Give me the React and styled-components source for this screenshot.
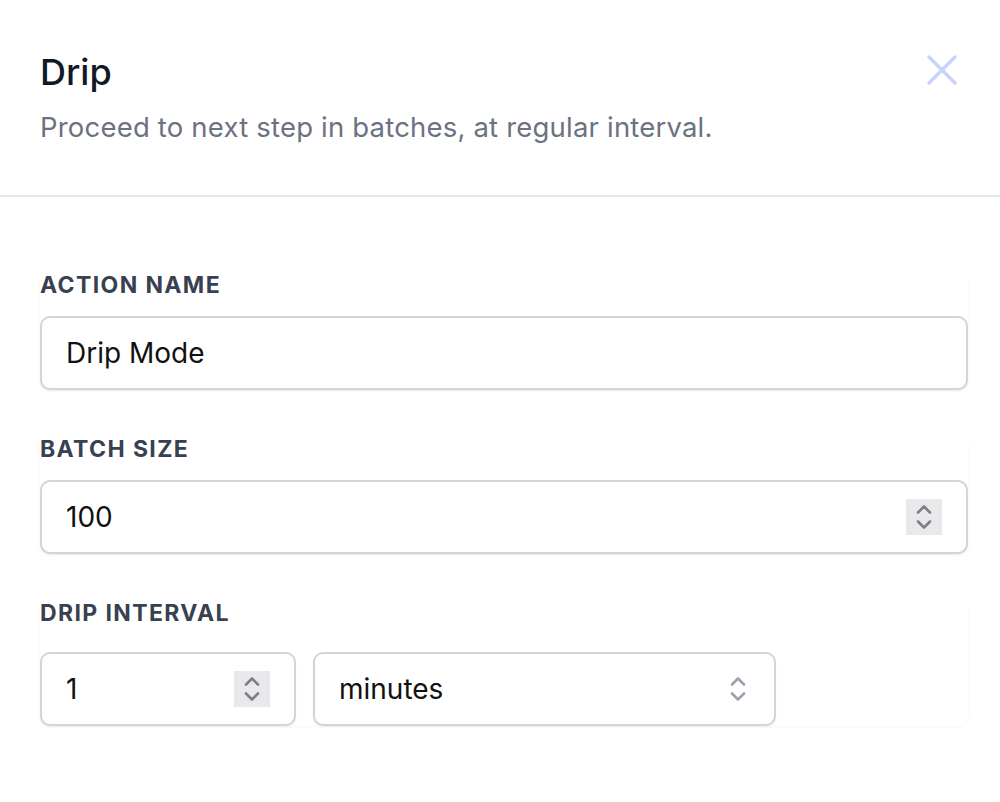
import React from "react";
import styled, { createGlobalStyle } from "styled-components";

const Global = createGlobalStyle`
  body {
    margin: 0;
    background: #fff;
    font-family: Inter, "Noto Sans", sans-serif;
  }
`;

const Panel = styled.div`
  width: 1000px;
  min-height: 802px;
  background: #fff;
`;

const Header = styled.header`
  display: flex;
  justify-content: space-between;
  align-items: flex-start;
  padding: 50px 40px 50px;
  border-bottom: 2px solid #e5e7eb;
`;

const Heading = styled.div`
  display: flex;
  flex-direction: column;
  gap: 15px;
`;

const Title = styled.h2`
  margin: 0;
  font-size: 36px;
  line-height: 44px;
  font-weight: 500;
  color: #111827;
`;

const Description = styled.p`
  margin: 0;
  font-size: 27.5px;
  line-height: 36px;
  letter-spacing: 0.007em;
  color: #6b7280;
`;

const Close = styled.button`
  border: none;
  background: none;
  padding: 0;
  margin: 5px 3px 0 0;
  width: 30px;
  height: 30px;
  color: #c7d2fe;
  cursor: pointer;
`;

const Body = styled.div`
  display: flex;
  flex-direction: column;
  gap: 43px;
  padding: 72px 32px 0 40px;
`;

const Card = styled.section`
  border-radius: 10px;
  box-shadow: 0 1px 3px rgba(0, 0, 0, 0.04);
`;

const Label = styled.label`
  display: block;
  font-size: 23px;
  line-height: 32px;
  font-weight: 700;
  letter-spacing: 0.06em;
  text-transform: uppercase;
  color: #374151;
  margin-bottom: ${(p) => p.$gap || 15}px;
`;

const Row = styled.div`
  display: flex;
  gap: 17px;
`;

const Field = styled.div`
  display: flex;
  align-items: center;
  box-sizing: border-box;
  width: ${(p) => p.$width || "100%"};
  height: 74px;
  padding: 0 24px;
  border: 2px solid #d1d5db;
  border-radius: 10px;
  background: #fff;
  box-shadow: 0 1px 2px rgba(0, 0, 0, 0.06);
`;

const Value = styled.span`
  flex: 1;
  font-size: 28px;
  color: #111;
`;

const Spinner = styled.span`
  display: flex;
  align-items: center;
  justify-content: center;
  width: 36px;
  height: 36px;
  background: ${(p) => (p.$plain ? "transparent" : "#e9e9ec")};
  color: ${(p) => (p.$plain ? "#9ca3af" : "#7b7f88")};
  margin-right: ${(p) => (p.$plain ? "-6px" : "0")};
`;

const UpDown = ({ size = 18 }) => (
  <svg width={size} height="28" viewBox="0 0 18 28" fill="none" stroke="currentColor" strokeWidth="2.6" strokeLinecap="round" strokeLinejoin="round">
    <path d="M3 9.5l6-6 6 6" />
    <path d="M3 18.5l6 6 6-6" />
  </svg>
);

export default function App() {
  return (
    <Panel>
      <Global />
      <Header>
        <Heading>
          <Title>Drip</Title>
          <Description>Proceed to next step in batches, at regular interval.</Description>
        </Heading>
        <Close aria-label="Close">
          <svg width="30" height="30" viewBox="0 0 30 30" fill="none" stroke="currentColor" strokeWidth="3.2" strokeLinecap="round">
            <path d="M2 2l26 26M28 2L2 28" />
          </svg>
        </Close>
      </Header>
      <Body>
        <Card>
          <Label>Action name</Label>
          <Field>
            <Value>Drip Mode</Value>
          </Field>
        </Card>
        <Card>
          <Label>Batch size</Label>
          <Field>
            <Value>100</Value>
            <Spinner><UpDown /></Spinner>
          </Field>
        </Card>
        <Card>
          <Label $gap={23}>Drip interval</Label>
          <Row>
            <Field $width="256px">
              <Value>1</Value>
              <Spinner><UpDown /></Spinner>
            </Field>
            <Field $width="463px">
              <Value>minutes</Value>
              <Spinner $plain><UpDown size={20} /></Spinner>
            </Field>
          </Row>
        </Card>
      </Body>
    </Panel>
  );
}
